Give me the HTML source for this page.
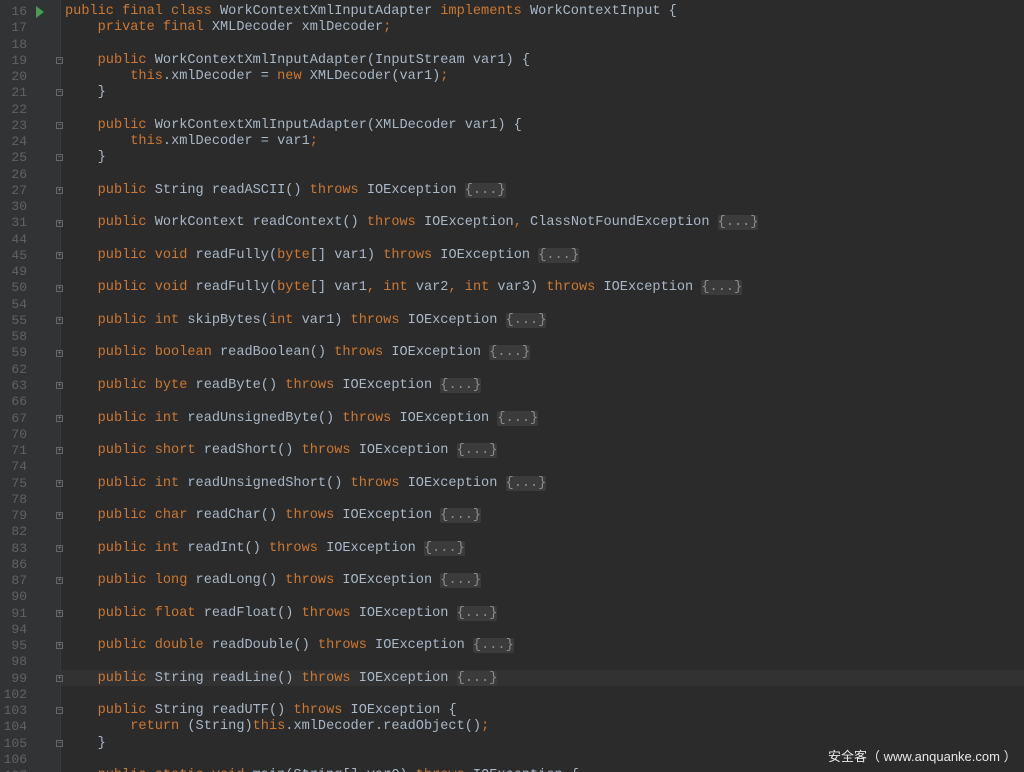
<!DOCTYPE html>
<html><head><meta charset="utf-8">
<style>
html{margin:0;padding:0;width:1024px;height:772px;overflow:hidden;background:#2b2b2b;}
body{margin:0;padding:0;width:1024px;height:772px;background:#2b2b2b;position:relative;overflow:hidden;font-family:"Liberation Mono",monospace;font-size:13.6px;}
#gut{position:absolute;left:0;top:0;width:60px;height:772px;background:#313335;}
#sep{position:absolute;left:60px;top:0;width:1px;height:772px;background:#3a3a3a;}
.hl{position:absolute;left:61px;width:963px;height:16px;background:#323232;}
.row{position:absolute;left:0;width:1024px;height:16.26px;line-height:16.26px;white-space:pre;}
.n{position:absolute;left:0;top:0;width:27px;text-align:right;color:#606366;font-size:13px;line-height:16.26px;}
.c{position:absolute;left:65px;top:0;color:#a9b7c6;line-height:16.26px;}
.k{color:#cc7832;}
.f{color:#8c8c8c;background:#3b3b3b;border-radius:2px;}
.m{position:absolute;left:56px;width:7px;height:7px;border:1px solid #666;box-sizing:border-box;background:#313335;font-size:7px;line-height:5px;text-align:center;color:#888;font-family:"Liberation Sans",sans-serif;}
.run{position:absolute;left:36px;top:6px;width:0;height:0;border-top:6px solid transparent;border-bottom:6px solid transparent;border-left:8px solid #499c54;}
#wm{position:absolute;left:828px;top:746px;color:#e8e8e8;font-family:"Liberation Sans","Noto Sans CJK SC",sans-serif;font-size:13px;white-space:nowrap;}
</style></head><body>
<div id="gut"></div><div id="sep"></div>
<div class="hl" style="top:670px"></div>
<div class="run"></div>
<div class="row" style="top:4px"><span class="n">16</span><span class="c"><span class="k">public final class </span>WorkContextXmlInputAdapter <span class="k">implements </span>WorkContextInput {</span></div>
<div class="row" style="top:20.26px"><span class="n">17</span><span class="c">    <span class="k">private final </span>XMLDecoder xmlDecoder<span class="k">;</span></span></div>
<div class="row" style="top:36.52px"><span class="n">18</span></div>
<div class="row" style="top:52.78px"><span class="n">19</span><span class="c">    <span class="k">public </span>WorkContextXmlInputAdapter(InputStream var1) {</span></div>
<div class="row" style="top:69.04px"><span class="n">20</span><span class="c">        <span class="k">this</span>.xmlDecoder = <span class="k">new </span>XMLDecoder(var1)<span class="k">;</span></span></div>
<div class="row" style="top:85.3px"><span class="n">21</span><span class="c">    }</span></div>
<div class="row" style="top:101.56px"><span class="n">22</span></div>
<div class="row" style="top:117.82px"><span class="n">23</span><span class="c">    <span class="k">public </span>WorkContextXmlInputAdapter(XMLDecoder var1) {</span></div>
<div class="row" style="top:134.08px"><span class="n">24</span><span class="c">        <span class="k">this</span>.xmlDecoder = var1<span class="k">;</span></span></div>
<div class="row" style="top:150.34px"><span class="n">25</span><span class="c">    }</span></div>
<div class="row" style="top:166.6px"><span class="n">26</span></div>
<div class="row" style="top:182.86px"><span class="n">27</span><span class="c">    <span class="k">public </span>String readASCII() <span class="k">throws </span>IOException <span class="f">{...}</span></span></div>
<div class="row" style="top:199.12px"><span class="n">30</span></div>
<div class="row" style="top:215.38px"><span class="n">31</span><span class="c">    <span class="k">public </span>WorkContext readContext() <span class="k">throws </span>IOException<span class="k">, </span>ClassNotFoundException <span class="f">{...}</span></span></div>
<div class="row" style="top:231.64px"><span class="n">44</span></div>
<div class="row" style="top:247.9px"><span class="n">45</span><span class="c">    <span class="k">public void </span>readFully(<span class="k">byte</span>[] var1) <span class="k">throws </span>IOException <span class="f">{...}</span></span></div>
<div class="row" style="top:264.16px"><span class="n">49</span></div>
<div class="row" style="top:280.42px"><span class="n">50</span><span class="c">    <span class="k">public void </span>readFully(<span class="k">byte</span>[] var1<span class="k">, int </span>var2<span class="k">, int </span>var3) <span class="k">throws </span>IOException <span class="f">{...}</span></span></div>
<div class="row" style="top:296.68px"><span class="n">54</span></div>
<div class="row" style="top:312.94px"><span class="n">55</span><span class="c">    <span class="k">public int </span>skipBytes(<span class="k">int </span>var1) <span class="k">throws </span>IOException <span class="f">{...}</span></span></div>
<div class="row" style="top:329.2px"><span class="n">58</span></div>
<div class="row" style="top:345.46px"><span class="n">59</span><span class="c">    <span class="k">public boolean </span>readBoolean() <span class="k">throws </span>IOException <span class="f">{...}</span></span></div>
<div class="row" style="top:361.72px"><span class="n">62</span></div>
<div class="row" style="top:377.98px"><span class="n">63</span><span class="c">    <span class="k">public byte </span>readByte() <span class="k">throws </span>IOException <span class="f">{...}</span></span></div>
<div class="row" style="top:394.24px"><span class="n">66</span></div>
<div class="row" style="top:410.5px"><span class="n">67</span><span class="c">    <span class="k">public int </span>readUnsignedByte() <span class="k">throws </span>IOException <span class="f">{...}</span></span></div>
<div class="row" style="top:426.76px"><span class="n">70</span></div>
<div class="row" style="top:443.02px"><span class="n">71</span><span class="c">    <span class="k">public short </span>readShort() <span class="k">throws </span>IOException <span class="f">{...}</span></span></div>
<div class="row" style="top:459.28px"><span class="n">74</span></div>
<div class="row" style="top:475.54px"><span class="n">75</span><span class="c">    <span class="k">public int </span>readUnsignedShort() <span class="k">throws </span>IOException <span class="f">{...}</span></span></div>
<div class="row" style="top:491.8px"><span class="n">78</span></div>
<div class="row" style="top:508.06px"><span class="n">79</span><span class="c">    <span class="k">public char </span>readChar() <span class="k">throws </span>IOException <span class="f">{...}</span></span></div>
<div class="row" style="top:524.32px"><span class="n">82</span></div>
<div class="row" style="top:540.58px"><span class="n">83</span><span class="c">    <span class="k">public int </span>readInt() <span class="k">throws </span>IOException <span class="f">{...}</span></span></div>
<div class="row" style="top:556.84px"><span class="n">86</span></div>
<div class="row" style="top:573.1px"><span class="n">87</span><span class="c">    <span class="k">public long </span>readLong() <span class="k">throws </span>IOException <span class="f">{...}</span></span></div>
<div class="row" style="top:589.36px"><span class="n">90</span></div>
<div class="row" style="top:605.62px"><span class="n">91</span><span class="c">    <span class="k">public float </span>readFloat() <span class="k">throws </span>IOException <span class="f">{...}</span></span></div>
<div class="row" style="top:621.88px"><span class="n">94</span></div>
<div class="row" style="top:638.14px"><span class="n">95</span><span class="c">    <span class="k">public double </span>readDouble() <span class="k">throws </span>IOException <span class="f">{...}</span></span></div>
<div class="row" style="top:654.4px"><span class="n">98</span></div>
<div class="row" style="top:670.66px"><span class="n">99</span><span class="c">    <span class="k">public </span>String readLine() <span class="k">throws </span>IOException <span class="f">{...}</span></span></div>
<div class="row" style="top:686.92px"><span class="n">102</span></div>
<div class="row" style="top:703.18px"><span class="n">103</span><span class="c">    <span class="k">public </span>String readUTF() <span class="k">throws </span>IOException {</span></div>
<div class="row" style="top:719.44px"><span class="n">104</span><span class="c">        <span class="k">return </span>(String)<span class="k">this</span>.xmlDecoder.readObject()<span class="k">;</span></span></div>
<div class="row" style="top:735.7px"><span class="n">105</span><span class="c">    }</span></div>
<div class="row" style="top:751.96px"><span class="n">106</span></div>
<div class="row" style="top:768.22px"><span class="n">107</span><span class="c">    <span class="k">public static void </span>main(String[] var0) <span class="k">throws </span>IOException {</span></div>

<div class="m" style="top:57px">−</div>
<div class="m" style="top:89px">−</div>
<div class="m" style="top:122px">−</div>
<div class="m" style="top:154px">−</div>
<div class="m" style="top:187px">+</div>
<div class="m" style="top:220px">+</div>
<div class="m" style="top:252px">+</div>
<div class="m" style="top:285px">+</div>
<div class="m" style="top:317px">+</div>
<div class="m" style="top:350px">+</div>
<div class="m" style="top:382px">+</div>
<div class="m" style="top:415px">+</div>
<div class="m" style="top:447px">+</div>
<div class="m" style="top:480px">+</div>
<div class="m" style="top:512px">+</div>
<div class="m" style="top:545px">+</div>
<div class="m" style="top:577px">+</div>
<div class="m" style="top:610px">+</div>
<div class="m" style="top:642px">+</div>
<div class="m" style="top:675px">+</div>
<div class="m" style="top:707px">−</div>
<div class="m" style="top:740px">−</div>
<div id="wm">安全客（ www.anquanke.com ）</div>
</body></html>
